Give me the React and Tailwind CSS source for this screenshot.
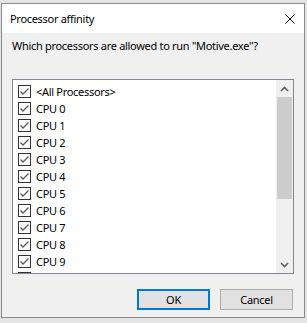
import React from "react";

const rows = [
  "<All Processors>",
  "CPU 0",
  "CPU 1",
  "CPU 2",
  "CPU 3",
  "CPU 4",
  "CPU 5",
  "CPU 6",
  "CPU 7",
  "CPU 8",
  "CPU 9",
  "",
];

function Check() {
  return (
    <span className="w-[13px] h-[13px] border border-[#333333] bg-white flex-none relative">
      <svg width="11" height="11" viewBox="0 0 11 11" className="absolute left-0 top-0">
        <path d="M1.5 5.5 L4 8 L9.5 2.5" fill="none" stroke="#5a5a5a" strokeWidth="1.3" />
      </svg>
    </span>
  );
}

export default function App() {
  return (
    <div
      className="w-[307px] h-[323px] bg-[#e4e4e4] overflow-hidden pt-[3px] pl-[1px] text-black tracking-[-0.3px]"
      style={{ fontFamily: '"Noto Sans", "Open Sans", sans-serif' }}
    >
      <div className="w-[304px] h-[315px] border border-[#8a8a8a] bg-[#f0f0f0] flex flex-col">
        <div className="h-[29px] bg-white flex items-center justify-between pl-[8px] pr-[9px]">
          <span className="text-[11px] leading-[16px] whitespace-nowrap">Processor affinity</span>
          <svg width="10" height="10" viewBox="0 0 10 10">
            <path d="M0.5 0.5 L9.5 9.5 M9.5 0.5 L0.5 9.5" stroke="#000" strokeWidth="1" fill="none" />
          </svg>
        </div>
        <div className="pl-[10px] pr-[10px] pt-[5px] flex flex-col">
          <div className="text-[11px] leading-[16px] whitespace-nowrap">Which processors are allowed to run "Motive.exe"?</div>
          <div className="mt-[25px] h-[195px] border border-[#828790] bg-white flex overflow-hidden">
            <div className="flex-1 pt-[3px] overflow-hidden">
              {rows.map((r, i) => (
                <div key={i} className="h-[17px] flex items-center pl-[5px] gap-[5px]">
                  <Check />
                  {r && <span className="text-[11px] leading-[16px] whitespace-nowrap">{r}</span>}
                </div>
              ))}
            </div>
            <div className="w-[17px] flex-none bg-[#f0f0f0] flex flex-col">
              <div className="h-[17px] flex items-center justify-center">
                <svg width="9" height="6" viewBox="0 0 9 6">
                  <path d="M1 5 L4.5 1.5 L8 5" stroke="#606060" strokeWidth="1.6" fill="none" />
                </svg>
              </div>
              <div className="h-[102px] mx-[1px] bg-[#cdcdcd]" />
              <div className="flex-1" />
              <div className="h-[17px] flex items-center justify-center">
                <svg width="9" height="6" viewBox="0 0 9 6">
                  <path d="M1 1 L4.5 4.5 L8 1" stroke="#606060" strokeWidth="1.6" fill="none" />
                </svg>
              </div>
            </div>
          </div>
          <div className="mt-[15px] flex justify-end gap-[10px] pr-[1px]">
            <button className="w-[73px] h-[21px] border-2 border-[#0078d7] bg-[#e1e1e1] text-[11px] leading-[16px] flex items-center justify-center">
              OK
            </button>
            <button className="w-[73px] h-[21px] border border-[#adadad] bg-[#e1e1e1] text-[11px] leading-[16px] flex items-center justify-center">
              Cancel
            </button>
          </div>
        </div>
      </div>
    </div>
  );
}
